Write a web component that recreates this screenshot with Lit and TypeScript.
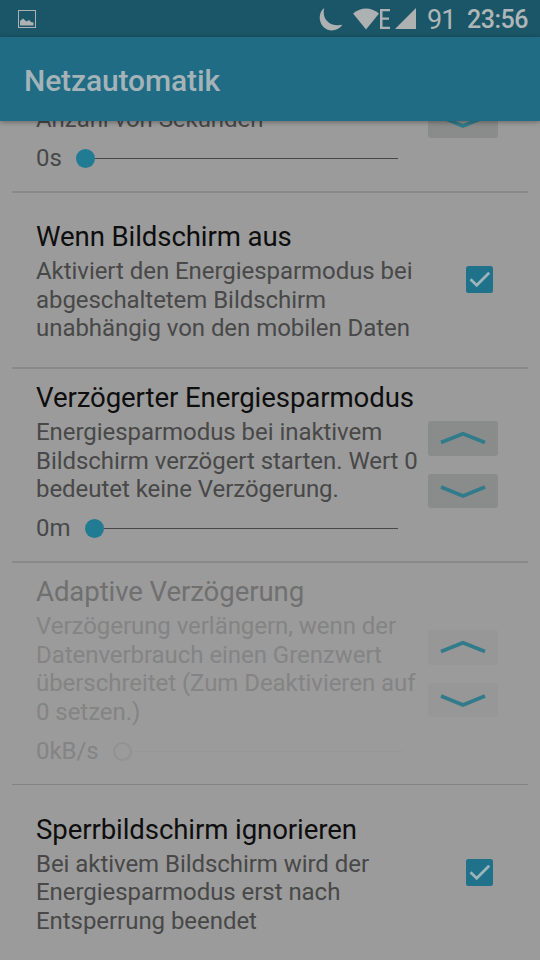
import { LitElement, html, css, nothing } from "lit";
import { customElement, property } from "lit/decorators.js";

@customElement("seek-slider")
class SeekSlider extends LitElement {
  @property() label = "";
  @property({ type: Boolean, reflect: true }) disabled = false;
  static styles = css`
    :host { display: flex; align-items: center; height: 28px; width: 362px; color: #484848; }
    :host([disabled]) { color: #848484; width: 367px; }
    .thumb { flex: none; width: 19px; height: 19px; border-radius: 50%; background: #207b93; margin-left: 14.5px; box-sizing: border-box; }
    .line { flex: 1; height: 1px; background: #484848; }
    :host([disabled]) .thumb { background: none; border: 2px solid #929292; }
    :host([disabled]) .line { background: #979797; margin-left: 2px; }
  `;
  render() {
    return html`<span>${this.label}</span><div class="thumb"></div><div class="line"></div>`;
  }
}

@customElement("step-buttons")
class StepButtons extends LitElement {
  @property({ type: Boolean, reflect: true }) disabled = false;
  static styles = css`
    :host { display: flex; flex-direction: column; gap: 18px; width: 70px; }
    .btn { height: 34.5px; border-radius: 3px; background: #8a8c8b; display: flex; align-items: center; justify-content: center; }
    :host([disabled]) .btn { background: #979797; }
    svg { display: block; width: 46px; height: 16px; }
    path { fill: none; stroke: #317b8b; stroke-width: 3.6; }
  `;
  render() {
    return html`
      <div class="btn"><svg viewBox="0 0 46 16"><path d="M1 12.5 23 3.8 45 12.5" /></svg></div>
      <div class="btn"><svg viewBox="0 0 46 16"><path d="M1 4 23 13 45 4" /></svg></div>
    `;
  }
}

@customElement("check-box")
class CheckBox extends LitElement {
  static styles = css`
    :host { display: block; width: 27px; height: 27px; }
    svg { display: block; width: 27px; height: 27px; }
  `;
  render() {
    return html`<svg viewBox="0 0 27 27">
      <rect width="27" height="27" rx="2.5" fill="#20718a" />
      <path d="M4.5 13.2 10.7 19.3 23.2 6.8" fill="none" stroke="#9bb5ba" stroke-width="2.7" />
    </svg>`;
  }
}

interface Pref {
  kind: string;
  title: string;
  lines: string[];
  slider?: string;
  disabled?: boolean;
}

const PREFS: Pref[] = [
  { kind: "partial", title: "", lines: ["Anzahl von Sekunden"], slider: "0s" },
  {
    kind: "check first",
    title: "Wenn Bildschirm aus",
    lines: ["Aktiviert den Energiesparmodus bei", "abgeschaltetem Bildschirm", "unabhängig von den mobilen Daten"],
  },
  {
    kind: "seek",
    title: "Verzögerter Energiesparmodus",
    lines: ["Energiesparmodus bei inaktivem", "Bildschirm verzögert starten. Wert 0", "bedeutet keine Verzögerung."],
    slider: "0m",
  },
  {
    kind: "seek tall",
    title: "Adaptive Verzögerung",
    lines: ["Verzögerung verlängern, wenn der", "Datenverbrauch einen Grenzwert", "überschreitet (Zum Deaktivieren auf", "0 setzen.)"],
    slider: "0kB/s",
    disabled: true,
  },
  {
    kind: "check last",
    title: "Sperrbildschirm ignorieren",
    lines: ["Bei aktivem Bildschirm wird der", "Energiesparmodus erst nach", "Entsperrung beendet"],
  },
];

@customElement("app-root")
class AppRoot extends LitElement {
  static styles = css`
    :host {
      display: flex; flex-direction: column; width: 540px; height: 960px; overflow: hidden;
      background: #9b9b9b; font-family: Roboto, "Noto Sans", sans-serif; font-size: 24px; line-height: 28.5px;
      letter-spacing: -0.05px;
    }
    .status {
      flex: none; height: 37px; box-sizing: border-box; background: #1a5667; color: #b0b6b8;
      display: flex; align-items: center; padding: 0 12px 0 18px;
    }
    .status svg { display: block; flex: none; fill: #adb1b2; }
    .photo { margin-right: auto; }
    .wifi { margin-left: 10px; }
    .status .network { width: 11px; height: 20px; margin: 1px 4px 0 1px; }
    .battery { font-size: 27px; margin-left: 11px; width: 40px; font-weight: 400; padding-top: 3px; letter-spacing: -1px; }
    .clock { font-size: 25px; font-weight: 500; padding-top: 4px; width: 61px; white-space: nowrap; letter-spacing: -0.5px; }
    .toolbar {
      flex: none; height: 84px; background: #1f6c84; color: #a4b3b8; display: flex; align-items: center;
      padding: 4px 24px 0; box-sizing: border-box; font-size: 30px; font-weight: 500; letter-spacing: -0.12px;
      box-shadow: 0 1px 5px rgba(0, 0, 0, 0.35); z-index: 1;
    }
    .list { flex: 1; min-height: 0; overflow: hidden; display: flex; flex-direction: column; padding: 0 12px; }
    .pref {
      flex: none; box-sizing: border-box; display: grid; grid-template-columns: 392px 70px;
      padding-left: 24px; border-bottom: 2px solid #898989; align-items: start; white-space: nowrap;
    }
    .grid-text { grid-column: 1; }
    .title { font-size: 27.6px; line-height: 32px; color: #0e0e0e; margin-bottom: 4.2px; letter-spacing: -0.1px; }
    .desc { color: #484848; }
    seek-slider { margin-top: 11px; }
    .off .title { color: #707070; }
    .off .desc { color: #848484; }
    .first { height: 176px; padding-top: 28px; }
    .seek { height: 194px; padding-top: 13px; }
    .tall { height: 222px; border-bottom-width: 1px; border-color: #838383; }
    .last { height: 175px; padding-top: 28.5px; border-bottom: none; }
    .partial { height: 72px; grid-template-rows: 70px; align-items: end; }
    .partial .grid-text { margin-bottom: 18.5px; }
    .partial step-buttons { margin-bottom: 53px; }
    .seek step-buttons { margin-top: 39px; }
    .tall step-buttons { margin-top: 54px; }
    check-box { margin: 45px 0 0 38px; }
  `;

  private renderPref(p: Pref) {
    return html`<section class="pref ${p.kind} ${p.disabled ? "off" : ""}">
      <div class="grid-text">
        ${p.title ? html`<div class="title">${p.title}</div>` : nothing}
        <div class="desc">${p.lines.map((l) => html`<div>${l}</div>`)}</div>
        ${p.slider ? html`<seek-slider .label=${p.slider} ?disabled=${p.disabled}></seek-slider>` : nothing}
      </div>
      ${p.slider ? html`<step-buttons ?disabled=${p.disabled}></step-buttons>` : html`<check-box></check-box>`}
    </section>`;
  }

  render() {
    return html`
      <div class="status">
        <svg class="photo" width="18" height="18" viewBox="0 0 18 18">
          <path d="M0 0H18V18H0ZM1 1V17H17V1Z" fill-rule="evenodd" />
          <path d="M2 15.5V11L5 8.5 8.5 11.5 11 10 13 12 15.5 12.5V15.5Z" />
        </svg>
        <svg width="24" height="24" viewBox="0 0 24 24">
          <path d="M5.2 1C2.8 11 9.5 20.5 23.5 17.8C19 24 10.5 25.3 5 20.5C-1.5 14.5 0 4.5 5.2 1Z" />
        </svg>
        <svg class="wifi" width="26" height="22" viewBox="0 0 26 22">
          <path d="M0 5.5Q13-4.5 26 5.5L13 21.5Z" />
        </svg>
        <svg class="network" viewBox="0 0 11 20"><path d="M0 0H10V2.3H2.5V8.5H9V10.8H2.5V17.7H10V20H0Z" /></svg>
        <svg width="21" height="21" viewBox="0 0 21 21"><path d="M21 0V21H0Z" /></svg>
        <span class="battery">91</span>
        <span class="clock">23:56</span>
      </div>
      <div class="toolbar">Netzautomatik</div>
      <div class="list">${PREFS.map((p) => this.renderPref(p))}</div>
    `;
  }
}
